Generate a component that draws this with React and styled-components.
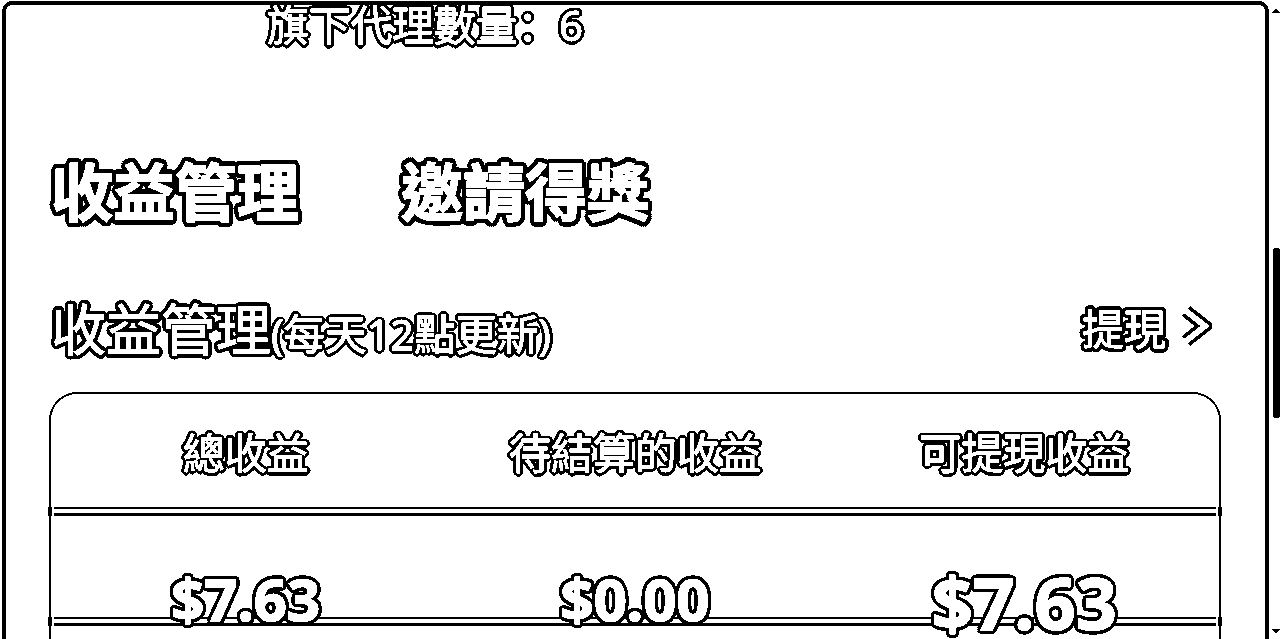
import styled, { createGlobalStyle } from "styled-components";

// black ring under the glyphs, the white stroke fattens the glyph itself
const ring = (r) => {
    const parts = [];
    for (let i = 0; i < 16; i++) {
        const a = (i / 16) * Math.PI * 2;
        parts.push(`${(Math.cos(a) * r).toFixed(2)}px ${(Math.sin(a) * r).toFixed(2)}px 0 #000`);
    }
    return parts.join(", ");
};

const GlobalStyle = createGlobalStyle`
    html, body {
        margin: 0;
        padding: 0;
        height: 100%;
        overflow: hidden;
        background: #fff;
    }
    body {
        font-family: "Noto Sans", "Noto Sans CJK TC", sans-serif;
        color: #fff;
    }
`;

const Page = styled.div`
    display: flex;
    width: 1280px;
    height: 639px;
    overflow: hidden;
    background: #fff;
    filter: grayscale(1) contrast(100);
`;
const Frame = styled.div`
    box-sizing: border-box;
    width: 1267px;
    height: 650px;
    flex: none;
    margin: 1px 0 0 2px;
    border: 4px solid #000;
    border-bottom: none;
    border-radius: 10px;
    overflow: hidden;
    padding-left: 43px;
`;
const Outlined = styled.span`
    -webkit-text-stroke: ${(props) => props.$fat || 1}px #fff;
    text-shadow: ${(props) => ring(props.$ring || 4)};
`;
const Colon = styled.span`
    font-family: "Noto Sans CJK SC", sans-serif;
`;
const AgentCount = styled.div`
    height: 40px;
    padding-left: 218px;
    margin-top: -2px;
    font-size: 42px;
    letter-spacing: -0.3px;
    line-height: 40px;
    white-space: nowrap;
`;
const Tabs = styled.div`
    display: flex;
    gap: 102px;
    margin-top: 104px;
    padding-left: 2px;
    font-size: 62px;
    font-weight: 700;
    line-height: 90px;
`;
const SectionHead = styled.div`
    display: flex;
    justify-content: space-between;
    align-items: center;
    box-sizing: border-box;
    width: 1170px;
    height: 70px;
    margin-top: 54px;
    padding-left: 2px;
`;
const SectionTitle = styled.div`
    font-size: 55px;
    white-space: nowrap;
`;
const SectionNote = styled.span`
    font-size: 41.5px;
`;
const Withdraw = styled.div`
    display: flex;
    align-items: center;
    gap: 14px;
    font-size: 42px;
    margin-right: 7px;
`;
const Card = styled.div`
    box-sizing: border-box;
    width: 1172px;
    height: 300px;
    margin-top: 31px;
    border: 2px solid #000;
    border-bottom: none;
    border-radius: 28px 28px 0 0;
`;
const LabelRow = styled.div`
    display: grid;
    grid-template-columns: repeat(3, 1fr);
    align-items: center;
    height: 113px;
    font-size: 42px;
    text-align: center;
`;
const Divider = styled.div`
    display: flex;
    height: 9px;
    margin: 0 -3px;
`;
const DividerEnd = styled.div`
    flex: none;
    width: 4px;
    background: #000;
`;
const DividerLines = styled.div`
    flex: 1;
    margin: 0 2px;
    border-top: 2px solid #000;
    border-bottom: 3px solid #000;
`;
const ValueRow = styled.div`
    display: grid;
    grid-template-columns: repeat(3, 1fr);
    align-items: end;
    height: 101px;
    text-align: center;
`;
const Value = styled.div`
    position: relative;
    z-index: 1;
    font-size: ${(props) => (props.$big ? 72 : 58)}px;
    font-weight: 700;
    line-height: 60px;
    margin-bottom: ${(props) => (props.$big ? -15 : -12)}px;
`;
const ScrollTrack = styled.div`
    display: flex;
    flex-direction: column;
    align-items: center;
    flex: none;
    width: 8px;
    margin-left: 3px;
    padding: 8px 0 5px;
    box-sizing: border-box;
`;
const Arrow = styled.div`
    width: 0;
    height: 0;
    border-left: 4px solid transparent;
    border-right: 4px solid transparent;
    ${(props) => (props.$down ? "border-top" : "border-bottom")}: 5px solid #000;
`;
const Thumb = styled.div`
    width: 7px;
    height: 170px;
    margin-top: 235px;
    border-radius: 3px;
    background: #000;
`;
const Spacer = styled.div`
    flex: 1;
`;

const Chevron = () => (
    <svg width="32" height="42" viewBox="0 0 32 42">
        <polyline points="6,6 25,21 6,36" fill="none" stroke="#000" strokeWidth="13" />
        <polyline points="6,6 25,21 6,36" fill="none" stroke="#fff" strokeWidth="6" />
    </svg>
);

const Rule = () => (
    <Divider>
        <DividerEnd />
        <DividerLines />
        <DividerEnd />
    </Divider>
);

const App = () => {
    return (
        <Page>
            <GlobalStyle />
            <Frame>
                <AgentCount>
                    <Outlined $ring={3.5}>旗下代理數量<Colon>：</Colon>6</Outlined>
                </AgentCount>
                <Tabs>
                    <Outlined $fat={1.5} $ring={5}>收益管理</Outlined>
                    <Outlined $fat={1.5} $ring={5}>邀請得獎</Outlined>
                </Tabs>
                <SectionHead>
                    <SectionTitle>
                        <Outlined>收益管理</Outlined>
                        <SectionNote><Outlined $ring={3.5}>(每天12點更新)</Outlined></SectionNote>
                    </SectionTitle>
                    <Withdraw>
                        <Outlined>提現</Outlined>
                        <Chevron />
                    </Withdraw>
                </SectionHead>
                <Card>
                    <LabelRow>
                        <Outlined $ring={3.5}>總收益</Outlined>
                        <Outlined $ring={3.5}>待結算的收益</Outlined>
                        <Outlined $ring={3.5}>可提現收益</Outlined>
                    </LabelRow>
                    <Rule />
                    <ValueRow>
                        <Value><Outlined $fat={1.5}>$7.63</Outlined></Value>
                        <Value><Outlined $fat={1.5}>$0.00</Outlined></Value>
                        <Value $big><Outlined $fat={1.5}>$7.63</Outlined></Value>
                    </ValueRow>
                    <Rule />
                </Card>
            </Frame>
            <ScrollTrack>
                <Arrow />
                <Thumb />
                <Spacer />
                <Arrow $down />
            </ScrollTrack>
        </Page>
    );
};

export default App;
